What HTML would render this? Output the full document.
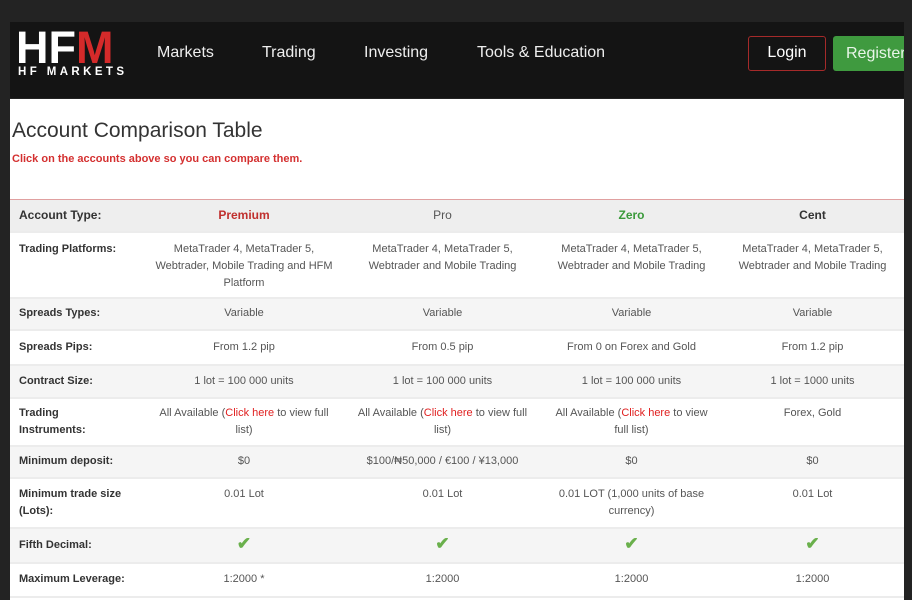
<!DOCTYPE html>
<html><head><meta charset="utf-8"><style>
*{margin:0;padding:0;box-sizing:border-box}
body{width:912px;height:600px;background:#232323;position:relative;overflow:hidden;font-family:"Liberation Sans",sans-serif}
.hdr{position:absolute;left:10px;top:22px;width:894px;height:76px;background:#141414}
.logo{position:absolute;left:6px;top:0px;color:#fff;font-weight:bold;font-size:45px;letter-spacing:0px;line-height:52px}
.logo small{position:absolute;left:2px;top:43px;font-size:11.5px;letter-spacing:3.4px;white-space:nowrap;line-height:14px}
.nav{position:absolute;top:22px;color:#eee;font-size:16px}
.login{position:absolute;left:738px;top:14px;width:78px;height:35px;border:1.5px solid #a52a2a;border-radius:3px;color:#fff;font-size:16px;text-align:center;line-height:32px}
.reg{position:absolute;left:823px;top:14px;width:71px;height:35px;background:#3f9a3f;border-radius:3px 0 0 3px;color:#e8f5e8;font-size:16px;line-height:35px;padding-left:13px;overflow:hidden;white-space:nowrap}
.main{position:absolute;left:10px;top:99px;width:894px;height:501px;background:#fff}
h1{position:absolute;left:2px;top:20px;font-weight:normal;font-size:21px;color:#333}
.sub{position:absolute;left:2px;top:54px;font-size:11px;font-weight:bold;color:#d43030}
table{position:absolute;left:0;top:100px;width:894px;border-collapse:collapse;border-top:1px solid #e0a0a0}
td{font-size:11px;color:#555;text-align:center;vertical-align:top;border-bottom:2px solid #ececec;line-height:17px;padding:0 6px}
td:first-child{text-align:left;font-weight:bold;color:#333;padding-left:9px}
tr.g td{background:#f5f5f5}
tr.h td{background:#eeeeee;font-weight:bold;font-size:12px;color:#333;vertical-align:middle}
a{color:#e02020;text-decoration:none}
.ck{color:#6ab04c;font-size:17px;font-weight:bold}
</style></head><body>
<div class="hdr">
<div class="logo">HF<span style="color:#d42a2a">M</span><small>HF MARKETS</small></div>
<div class="nav" style="left:147px">Markets</div>
<div class="nav" style="left:252px">Trading</div>
<div class="nav" style="left:354px">Investing</div>
<div class="nav" style="left:467px">Tools &amp; Education</div>
<div class="login">Login</div>
<div class="reg">Register</div>
</div>
<div class="main">
<h1>Account Comparison Table</h1>
<div class="sub">Click on the accounts above so you can compare them.</div>
<table>
<colgroup><col style="width:135px"><col style="width:198px"><col style="width:199px"><col style="width:179px"><col style="width:183px"></colgroup>
<tr class="h" style="height:32px"><td>Account Type:</td><td style="color:#c0302e">Premium</td><td style="font-weight:normal;color:#555">Pro</td><td style="color:#3a9a3a">Zero</td><td>Cent</td></tr>
<tr style="height:66px"><td style="padding-top:8px">Trading Platforms:</td><td style="padding-top:8px">MetaTrader 4, MetaTrader 5, Webtrader, Mobile Trading and HFM Platform</td><td style="padding-top:8px">MetaTrader 4, MetaTrader 5, Webtrader and Mobile Trading</td><td style="padding-top:8px">MetaTrader 4, MetaTrader 5, Webtrader and Mobile Trading</td><td style="padding-top:8px">MetaTrader 4, MetaTrader 5, Webtrader and Mobile Trading</td></tr>
<tr class="g" style="height:32px"><td style="vertical-align:middle">Spreads Types:</td><td style="vertical-align:middle">Variable</td><td style="vertical-align:middle">Variable</td><td style="vertical-align:middle">Variable</td><td style="vertical-align:middle">Variable</td></tr>
<tr style="height:35px"><td style="vertical-align:middle">Spreads Pips:</td><td style="vertical-align:middle">From 1.2 pip</td><td style="vertical-align:middle">From 0.5 pip</td><td style="vertical-align:middle">From 0 on Forex and Gold</td><td style="vertical-align:middle">From 1.2 pip</td></tr>
<tr class="g" style="height:33px"><td style="vertical-align:middle">Contract Size:</td><td style="vertical-align:middle">1 lot = 100 000 units</td><td style="vertical-align:middle">1 lot = 100 000 units</td><td style="vertical-align:middle">1 lot = 100 000 units</td><td style="vertical-align:middle">1 lot = 1000 units</td></tr>
<tr style="height:48px"><td style="padding-top:6px">Trading<br>Instruments:</td><td style="padding-top:6px">All Available (<a>Click here</a> to view full list)</td><td style="padding-top:6px">All Available (<a>Click here</a> to view full list)</td><td style="padding-top:6px">All Available (<a>Click here</a> to view full list)</td><td style="padding-top:6px">Forex, Gold</td></tr>
<tr class="g" style="height:32px"><td style="vertical-align:middle">Minimum deposit:</td><td style="vertical-align:middle">$0</td><td style="vertical-align:middle">$100/₦50,000 / €100 / ¥13,000</td><td style="vertical-align:middle">$0</td><td style="vertical-align:middle">$0</td></tr>
<tr style="height:50px"><td style="padding-top:7px">Minimum trade size<br>(Lots):</td><td style="padding-top:7px">0.01 Lot</td><td style="padding-top:7px">0.01 Lot</td><td style="padding-top:7px">0.01 LOT (1,000 units of base currency)</td><td style="padding-top:7px">0.01 Lot</td></tr>
<tr class="g" style="height:35px"><td style="vertical-align:middle">Fifth Decimal:</td><td style="vertical-align:middle"><span class="ck">✔</span></td><td style="vertical-align:middle"><span class="ck">✔</span></td><td style="vertical-align:middle"><span class="ck">✔</span></td><td style="vertical-align:middle"><span class="ck">✔</span></td></tr>
<tr style="height:34px"><td style="vertical-align:middle">Maximum Leverage:</td><td style="vertical-align:middle">1:2000 *</td><td style="vertical-align:middle">1:2000</td><td style="vertical-align:middle">1:2000</td><td style="vertical-align:middle">1:2000</td></tr>
</table>
</div>
</body></html>
